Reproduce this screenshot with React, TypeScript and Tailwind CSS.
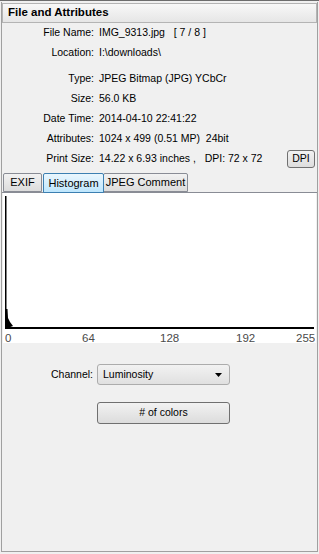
import React from "react";

/* ─── Label / value row ───────────────────────────────────── */
function Row({ label, children }: { label: string; children: React.ReactNode }) {
  return (
    <div className="flex items-center h-[20px]">
      <span className="w-[92px] text-right shrink-0">{label}</span>
      <span className="ml-[5px] flex-1 flex items-center whitespace-pre">{children}</span>
    </div>
  );
}

/* ─── Tab pill ────────────────────────────────────────────── */
function Tab({ label, active = false, w }: { label: string; active?: boolean; w: string }) {
  const cls = active
    ? "h-[20px] -mb-px border border-[#3c7fb1] bg-gradient-to-b from-[#eaf6fd] to-[#bee6fd] relative z-10"
    : "h-[19px] border border-[#898c95] bg-gradient-to-b from-[#f2f2f2] to-[#dcdcdc]";
  return (
    <div className={`${cls} ${w} flex items-center justify-center whitespace-nowrap rounded-t-[2px] -mr-px`}>
      {label}
    </div>
  );
}

/* ─── Histogram chart ─────────────────────────────────────── */
function Histogram() {
  const ticks = [
    { t: "0", x: 2 },
    { t: "64", x: 79 },
    { t: "128", x: 157 },
    { t: "192", x: 233 },
    { t: "255", x: 293 },
  ];
  return (
    <svg width="312" height="150" className="block">
      <rect x="2" y="3" width="1.5" height="133" fill="#000" />
      <polygon points="2,116 4.5,116 5,125 7,129 10,133 2,136" fill="#000" />
      <rect x="2" y="134" width="309" height="2" fill="#000" />
      {ticks.map((k) => (
        <text
          key={k.t}
          x={k.x}
          y="149"
          fontSize="11.5"
          fill="#4a4a4a"
          fontFamily="Liberation Sans, Arial, sans-serif"
        >
          {k.t}
        </text>
      ))}
    </svg>
  );
}

export default function App() {
  return (
    <div className="w-[319px] h-[554px] bg-[#f0f0f0] font-['Liberation_Sans',Arial,sans-serif] text-[10.5px] text-black border-t border-[#6d6d6d] p-px pb-[2px]">
      <div className="h-full flex flex-col border border-[#a0a0a0] border-t-0">
        {/* header */}
        <div className="h-[20px] mt-px flex items-center pl-[5px] font-bold text-[11.5px] bg-gradient-to-b from-[#f8f8f8] to-[#e6e6e6] border border-[#b4b4b4]">
          File and Attributes
        </div>

        {/* file info */}
        <div className="flex flex-col">
          <Row label="File Name:">IMG_9313.jpg   [ 7 / 8 ]</Row>
          <Row label="Location:">I:\downloads\</Row>
          <div className="h-[6px]" />
          <Row label="Type:">JPEG Bitmap (JPG) YCbCr</Row>
          <Row label="Size:">56.0 KB</Row>
          <Row label="Date Time:">2014-04-10 22:41:22</Row>
          <Row label="Attributes:">1024 x 499 (0.51 MP)  24bit</Row>
          <Row label="Print Size:">
            <span>14.22 x 6.93 inches ,   DPI: 72 x 72</span>
            <span className="ml-auto mr-[2px] w-[28px] h-[18px] border border-[#707070] rounded-[3px] bg-gradient-to-b from-[#f2f2f2] to-[#dddddd] flex items-center justify-center">
              DPI
            </span>
          </Row>
        </div>

        {/* tabs */}
        <div className="flex items-end mt-[4px] pl-[1px] text-[11px]">
          <Tab label="EXIF" w="w-[39px]" />
          <div className="w-[2px]" />
          <Tab label="Histogram" active w="w-[61px]" />
          <Tab label="JPEG Comment" w="w-[85px]" />
        </div>

        {/* tab pane */}
        <div className="flex-1 flex flex-col border-t border-[#898c95]">
          <div className="mx-px bg-white h-[150px]">
            <Histogram />
          </div>

          <div className="flex items-center mt-[21px]">
            <span className="w-[91px] text-right">Channel:</span>
            <div className="ml-[4px] w-[133px] h-[21px] border border-[#acacac] rounded-[3px] bg-gradient-to-b from-[#f2f2f2] to-[#e0e0e0] flex items-center pl-[5px] pr-[7px]">
              <span className="flex-1">Luminosity</span>
              <svg width="7" height="4" viewBox="0 0 7 4">
                <polygon points="0,0 7,0 3.5,4" fill="#000" />
              </svg>
            </div>
          </div>

          <div className="flex mt-[17px]">
            <div className="ml-[95px] w-[133px] h-[22px] border border-[#707070] rounded-[3px] bg-gradient-to-b from-[#f2f2f2] to-[#dcdcdc] flex items-center justify-center">
              # of colors
            </div>
          </div>
        </div>
      </div>
    </div>
  );
}
